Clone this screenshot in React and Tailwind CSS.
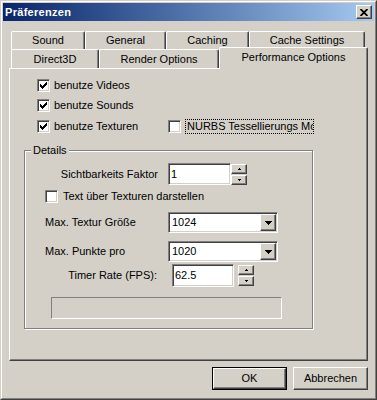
import React from "react";

/* ---------- small classic widgets ---------- */

const raised =
  "border border-t-white border-l-white border-r-[#404040] border-b-[#404040] shadow-[inset_-1px_-1px_0_#808080] bg-[#d4d0c8]";
const sunken =
  "border border-t-[#808080] border-l-[#808080] border-r-white border-b-white shadow-[inset_1px_1px_0_#404040,inset_-1px_-1px_0_#d4d0c8] bg-white";

function CheckMark() {
  // 7x7 classic check, one 1x3 column per x
  const cols = [2, 3, 4, 3, 2, 1, 0];
  return (
    <svg width="7" height="7" viewBox="0 0 7 7" shapeRendering="crispEdges">
      {cols.map((y, x) => (
        <rect key={x} x={x} y={y} width="1" height="3" fill="#000" />
      ))}
    </svg>
  );
}

function Checkbox({ checked }) {
  return (
    <div className={`w-[13px] h-[13px] shrink-0 flex items-center justify-center ${sunken}`}>
      {checked && <CheckMark />}
    </div>
  );
}

function Arrow({ up, w = 5, h = 3 }) {
  return (
    <svg width={w} height={h} viewBox={`0 0 ${w} ${h}`} shapeRendering="crispEdges">
      <polygon
        points={up ? `0,${h} ${w},${h} ${w / 2},0` : `0,0 ${w},0 ${w / 2},${h}`}
        fill="#000"
      />
    </svg>
  );
}

function Spin() {
  return (
    <div className="flex flex-col w-[16px] h-[22px] pt-[1px] gap-[1px]">
      <div className={`h-[10px] flex items-center justify-center ${raised}`}>
        <Arrow up w={3} h={2} />
      </div>
      <div className={`h-[11px] flex items-center justify-center ${raised}`}>
        <Arrow w={3} h={2} />
      </div>
    </div>
  );
}

function TextBox({ value, w }) {
  return (
    <div className={`h-full flex items-center pl-[2px] ${sunken}`} style={{ width: w }}>
      {value}
    </div>
  );
}

function Combo({ value }) {
  return (
    <div className={`w-[110px] h-[21px] flex items-center p-[1px] ${sunken}`}>
      <div className="flex-1 pl-[2px]">{value}</div>
      <div className={`w-[16px] h-[17px] flex items-center justify-center ${raised}`}>
        <Arrow w={7} h={4} />
      </div>
    </div>
  );
}

function Tab({ label, w, h, selected }) {
  return (
    <div
      className={`border border-b-0 border-l-white border-t-white border-r-[#404040] shadow-[inset_-1px_0_0_#808080] rounded-t-[2px] bg-[#d4d0c8] flex items-center justify-center shrink-0 ${
        selected ? "relative z-10 -mb-[1px] pb-[3px]" : ""
      }`}
      style={{ width: w, height: h }}
    >
      {label}
    </div>
  );
}

function Button({ label, isDefault }) {
  return (
    <div className={`w-[75px] h-[23px] ${isDefault ? "border border-black" : ""}`}>
      <div className={`w-full h-full flex items-center justify-center ${raised}`}>{label}</div>
    </div>
  );
}

/* ---------- dialog ---------- */

export default function App() {
  return (
    <div className="w-[377px] h-[400px] bg-[#d4d0c8] text-[11px] leading-[13px] text-black font-['Liberation_Sans',Arial,sans-serif]">
      <div className="w-full h-full border border-t-[#d4d0c8] border-l-[#d4d0c8] border-r-[#404040] border-b-[#404040]">
        <div className="w-full h-full border border-t-white border-l-white border-r-[#808080] border-b-[#808080] p-[1px] flex flex-col">
          {/* TITLE BAR */}
          <div className="h-[18px] shrink-0 flex items-center pl-[2px] pr-[2px] bg-gradient-to-r from-[#0a246a] to-[#a6caf0]">
            <span className="flex-1 text-white font-bold tracking-[0.3px]">Präferenzen</span>
            <div className={`w-[16px] h-[14px] flex items-center justify-center ${raised}`}>
              <svg width="8" height="7" viewBox="0 0 8 7">
                <path d="M0.5 0 L7.5 7 M7.5 0 L0.5 7" stroke="#000" strokeWidth="1.8" />
              </svg>
            </div>
          </div>

          {/* TABS */}
          <div className="mt-[10px] ml-[6px] mr-[6px]">
            <div className="flex pl-[2px] h-[18px] items-start">
              <Tab label="Sound" w={74} h={18} />
              <Tab label="General" w={81} h={18} />
              <Tab label="Caching" w={83} h={18} />
              <Tab label="Cache Settings" w={116} h={18} />
            </div>
            <div className="flex pl-[2px] h-[21px] -mt-[2px] items-end">
              <Tab label="Direct3D" w={88} h={19} />
              <Tab label="Render Options" w={120} h={19} />
              <Tab label="Performance Options" w={149} h={22} selected />
            </div>

            {/* PANEL */}
            <div className="h-[293px] border border-t-white border-l-white border-r-[#404040] border-b-[#404040] shadow-[inset_-1px_-1px_0_#808080] pt-[10px]">
              <div className="pl-[27px] flex flex-col">
                <div className="h-[13px] flex items-center gap-[4px]">
                  <Checkbox checked />
                  <span>benutze Videos</span>
                </div>
                <div className="h-[13px] mt-[7px] flex items-center gap-[4px]">
                  <Checkbox checked />
                  <span>benutze Sounds</span>
                </div>
                <div className="h-[13px] mt-[8px] flex items-center">
                  <Checkbox checked />
                  <span className="ml-[4px] w-[114px]">benutze Texturen</span>
                  <Checkbox />
                  <div className="ml-[4px] h-[15px] w-[129px] border border-dotted border-black flex items-center pl-[1px] overflow-hidden whitespace-nowrap">
                    NURBS Tessellierungs Mo
                  </div>
                </div>
              </div>

              {/* DETAILS GROUP */}
              <div className="relative ml-[14px] mt-[17px] w-[289px] h-[179px] border border-[#808080] shadow-[1px_1px_0_white,inset_1px_1px_0_white] pt-[12px]">
                <div className="absolute left-[6px] -top-[7px] px-[2px] bg-[#d4d0c8]">Details</div>

                <div className="h-[22px] flex items-center">
                  <div className="w-[133px] text-right">Sichtbarkeits Faktor</div>
                  <div className="ml-[10px] h-full flex">
                    <TextBox value="1" w={63} />
                    <Spin />
                  </div>
                </div>

                <div className="h-[13px] mt-[5px] pl-[20px] flex items-center gap-[5px]">
                  <Checkbox />
                  <span>Text über Texturen darstellen</span>
                </div>

                <div className="h-[21px] mt-[9px] flex items-center">
                  <div className="w-[143px] pl-[20px]">Max. Textur Größe</div>
                  <Combo value="1024" />
                </div>

                <div className="h-[21px] mt-[8px] flex items-center">
                  <div className="w-[143px] pl-[20px]">Max. Punkte pro</div>
                  <Combo value="1020" />
                </div>

                <div className="h-[23px] mt-[2px] flex items-center">
                  <div className="w-[132px] text-right">Timer Rate (FPS):</div>
                  <div className="ml-[15px] h-full flex gap-[4px]">
                    <TextBox value="62.5" w={62} />
                    <Spin />
                  </div>
                </div>

                <div className="ml-[26px] mt-[10px] w-[231px] h-[22px] border border-t-[#808080] border-l-[#808080] border-r-white border-b-white" />
              </div>
            </div>
          </div>

          {/* BUTTONS */}
          <div className="flex justify-end gap-[6px] pr-[6px] mt-[6px]">
            <Button label="OK" isDefault />
            <Button label="Abbrechen" />
          </div>
        </div>
      </div>
    </div>
  );
}
